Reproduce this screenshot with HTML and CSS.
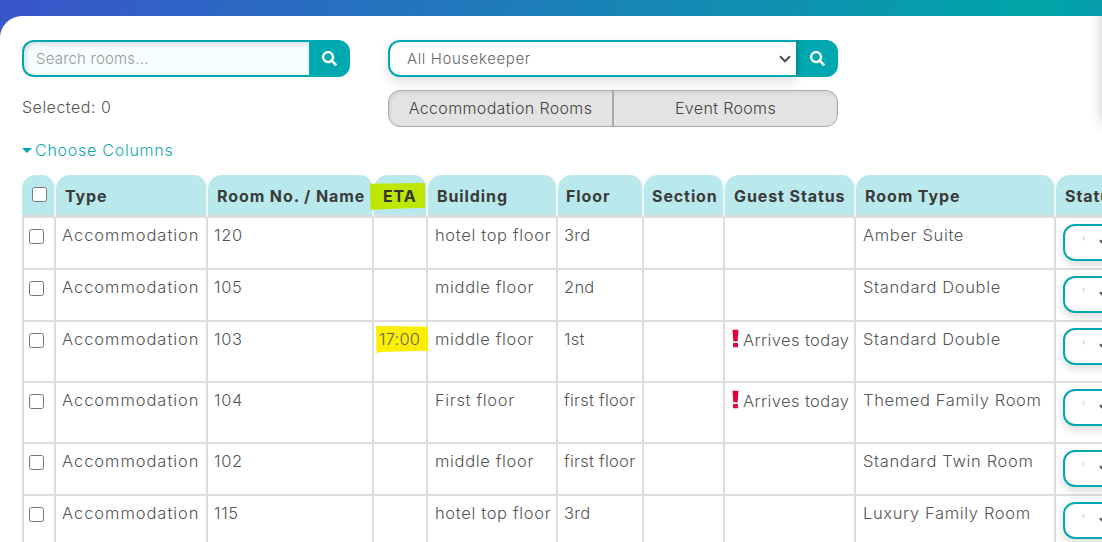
FILE: index.html
```html
<!DOCTYPE html>
<html lang="en">
<head>
<meta charset="utf-8">
<title>Rooms</title>
<link rel="stylesheet" href="styles.css">
</head>
<body>
<div class="topbar"></div>
<main class="panel">
  <div class="filters">
    <form class="group search">
      <input class="search-input" type="text" placeholder="Search rooms...">
      <button class="go" type="button"><svg class="mag" viewBox="0 0 512 512"><path d="M505 442.7L405.3 343c-4.5-4.5-10.6-7-17-7H372c27.6-35.3 44-79.7 44-128C416 93.1 322.9 0 208 0S0 93.1 0 208s93.1 208 208 208c48.3 0 92.7-16.4 128-44v16.3c0 6.4 2.5 12.5 7 17l99.7 99.7c9.4 9.4 24.6 9.4 33.9 0l28.3-28.3c9.4-9.4 9.4-24.6.1-34zM208 336c-70.7 0-128-57.2-128-128 0-70.7 57.2-128 128-128 70.7 0 128 57.2 128 128 0 70.7-57.2 128-128 128z"/></svg></button>
    </form>
    <form class="group housekeeper">
      <select class="hk-select"><option>All Housekeeper</option></select>
      <button class="go go-small" type="button"><svg class="mag" viewBox="0 0 512 512"><path d="M505 442.7L405.3 343c-4.5-4.5-10.6-7-17-7H372c27.6-35.3 44-79.7 44-128C416 93.1 322.9 0 208 0S0 93.1 0 208s93.1 208 208 208c48.3 0 92.7-16.4 128-44v16.3c0 6.4 2.5 12.5 7 17l99.7 99.7c9.4 9.4 24.6 9.4 33.9 0l28.3-28.3c9.4-9.4 9.4-24.6.1-34zM208 336c-70.7 0-128-57.2-128-128 0-70.7 57.2-128 128-128 70.7 0 128 57.2 128 128 0 70.7-57.2 128-128 128z"/></svg></button>
    </form>
    <div class="selected">Selected: 0</div>
    <div class="toggle">
      <button class="tab tab-a" type="button">Accommodation Rooms</button>
      <button class="tab tab-b" type="button">Event Rooms</button>
    </div>
  </div>
  <a class="choose" href="#"><span class="caret"></span>Choose Columns</a>
  <table class="rooms">
    <colgroup>
      <col class="c1"><col class="c2"><col class="c3"><col class="c4"><col class="c5"><col class="c6"><col class="c7"><col class="c8"><col class="c9"><col class="c10">
    </colgroup>
    <thead>
      <tr>
        <th class="check-h"><input type="checkbox"></th>
        <th>Type</th>
        <th>Room No. / Name</th>
        <th class="eta-h"><span class="mark-eta">ETA</span></th>
        <th>Building</th>
        <th class="floor-h">Floor</th>
        <th class="tight">Section</th>
        <th>Guest Status</th>
        <th>Room Type</th>
        <th>Status</th>
      </tr>
    </thead>
    <tbody>
      <tr class="short">
        <td class="check"><input type="checkbox"></td><td class="kind">Accommodation</td><td>120</td><td></td><td>hotel top floor</td><td class="fl">3rd</td><td></td><td></td><td>Amber Suite</td>
        <td class="st"><select class="status"><option>'</option></select></td>
      </tr>
      <tr class="short">
        <td class="check"><input type="checkbox"></td><td class="kind">Accommodation</td><td>105</td><td></td><td>middle floor</td><td class="fl">2nd</td><td></td><td></td><td>Standard Double</td>
        <td class="st"><select class="status"><option>'</option></select></td>
      </tr>
      <tr class="tall">
        <td class="check"><input type="checkbox"></td><td class="kind">Accommodation</td><td>103</td><td class="eta"><span class="mark-time">17:00</span></td><td>middle floor</td><td class="fl">1st</td><td></td>
        <td class="guest"><svg class="bang" viewBox="0 0 8 20"><path d="M0.6 0H7.4L6.5 13H1.5ZM1.2 15H6.8V20H1.2Z"/></svg>Arrives today</td><td>Standard Double</td>
        <td class="st"><select class="status"><option>'</option></select></td>
      </tr>
      <tr class="tall">
        <td class="check"><input type="checkbox"></td><td class="kind">Accommodation</td><td>104</td><td></td><td>First floor</td><td class="fl">first floor</td><td></td>
        <td class="guest"><svg class="bang" viewBox="0 0 8 20"><path d="M0.6 0H7.4L6.5 13H1.5ZM1.2 15H6.8V20H1.2Z"/></svg>Arrives today</td><td>Themed Family Room</td>
        <td class="st"><select class="status"><option>'</option></select></td>
      </tr>
      <tr class="short">
        <td class="check"><input type="checkbox"></td><td class="kind">Accommodation</td><td>102</td><td></td><td>middle floor</td><td class="fl">first floor</td><td></td><td></td><td>Standard Twin Room</td>
        <td class="st"><select class="status"><option>'</option></select></td>
      </tr>
      <tr class="short">
        <td class="check"><input type="checkbox"></td><td class="kind">Accommodation</td><td>115</td><td></td><td>hotel top floor</td><td class="fl">3rd</td><td></td><td></td><td>Luxury Family Room</td>
        <td class="st"><select class="status"><option>'</option></select></td>
      </tr>
    </tbody>
  </table>
</main>
</body>
</html>
```
FILE: styles.css
```css
* { box-sizing: border-box; }
html, body { margin: 0; height: 100%; overflow: hidden; }
body {
  background: linear-gradient(100deg, #3a55cb 0%, #00a5a8 87%, #1190b4 100%);
  font-family: "Inter", "Noto Sans", sans-serif;
  font-weight: 300;
  font-size: 16px;
  letter-spacing: 0.35px;
  color: #444;
}
.topbar { height: 16px; }
.panel {
  position: relative;
  background: #fff;
  border-top-left-radius: 22px;
  height: 526px;
  padding: 24px 0 0 22px;
  overflow: hidden;
}
.panel::after {
  content: "";
  position: absolute;
  top: -12px;
  right: -14px;
  width: 14px;
  height: 118px;
  box-shadow: 0 0 14px rgba(0, 0, 0, 0.22);
}
.filters {
  display: grid;
  grid-template-columns: 328px 450px;
  column-gap: 38px;
  row-gap: 13px;
  grid-template-rows: 37px 37px;
}
.group {
  display: flex;
  margin: 0;
  height: 37px;
  border-radius: 12px;
}
.search-input {
  flex: 1;
  min-width: 0;
  height: 37px;
  border: 2px solid #00a8b0;
  border-right: 0;
  border-radius: 12px 0 0 12px;
  background: #f5fdfe;
  box-shadow: inset 2px 2px 5px rgba(0, 0, 0, 0.12);
  padding: 0 12px 1px;
  font: inherit;
  font-size: 15px;
  letter-spacing: 0.2px;
  color: #444;
  outline: none;
}
.search-input::placeholder { color: #999; opacity: 1; }
.go {
  width: 41px;
  height: 37px;
  border: 0;
  padding: 0;
  background: #00a8b0;
  border-radius: 0 12px 12px 0;
  display: flex;
  align-items: center;
  justify-content: center;
}
.go-small { width: 42px; box-shadow: inset 5px 0 6px -4px rgba(0, 0, 0, 0.25); }
.mag { width: 15px; height: 15px; fill: #fff; }
.hk-select {
  flex: 1;
  min-width: 0;
  height: 37px;
  appearance: none;
  border: 2px solid #00a8b0;
  border-right: 0;
  border-radius: 12px 0 0 12px;
  background: #fff url("data:image/svg+xml,%3Csvg xmlns='http://www.w3.org/2000/svg' width='12' height='8' viewBox='0 0 12 8'%3E%3Cpath d='M1 1.2l5 5 5-5' fill='none' stroke='%23555' stroke-width='2.2'/%3E%3C/svg%3E") no-repeat 389px 13px;
  box-shadow: 0 5px 12px rgba(0, 0, 0, 0.13);
  padding: 0 12px 0 17px;
  font: inherit;
  font-size: 15px;
  letter-spacing: 0.6px;
  color: #666;
  outline: none;
}
.selected { align-self: center; color: #555; letter-spacing: 0.5px; padding-bottom: 3px; }
.toggle {
  display: flex;
  height: 37px;
  border: 1px solid #aaa;
  border-radius: 12px;
  background: #e3e3e3;
  box-shadow: inset 1px 2px 4px rgba(0, 0, 0, 0.08);
  overflow: hidden;
}
.tab {
  background: transparent;
  border: 0;
  padding: 0 0 2px;
  font: inherit;
  letter-spacing: inherit;
  color: #444;
}
.tab-a { width: 225px; border-right: 2px solid #aaa; }
.tab-b { flex: 1; }
.choose {
  display: flex;
  align-items: center;
  margin-top: 13px;
  height: 20px;
  color: #14a8b0;
  text-decoration: none;
  font-size: 16px;
  letter-spacing: 0.75px;
}
.caret {
  width: 0;
  height: 0;
  border-left: 5px solid transparent;
  border-right: 5px solid transparent;
  border-top: 5px solid #00a8b0;
  margin-right: 3px;
}
.rooms {
  margin-top: 15px;
  width: 1120px;
  table-layout: fixed;
  border-collapse: separate;
  border-spacing: 0;
  font-size: 16.5px;
  letter-spacing: 0.65px;
}
.c1 { width: 34px; } .c2 { width: 152px; } .c3 { width: 166px; } .c4 { width: 54px; }
.c5 { width: 130px; } .c6 { width: 86px; } .c7 { width: 81px; } .c8 { width: 131px; }
.c9 { width: 200px; } .c10 { width: 86px; }
th {
  height: 43px;
  background: #b9e9ec;
  border-bottom: 3px solid #ddd;
  border-right: 2px solid #eef5f5;
  border-radius: 14px 14px 0 0;
  padding: 2px 0 0 9px;
  text-align: left;
  font-size: 16px;
  font-weight: 700;
  white-space: nowrap;
  color: #3a3a3a;
  letter-spacing: 0.9px;
}
.check-h { padding: 0 0 2px 10px; }
.check-h input { margin: 0; width: 15px; height: 15px; display: block; }
td {
  border-right: 2px solid #ddd;
  border-bottom: 2px solid #ddd;
  padding: 7px 0 0 6px;
  vertical-align: top;
  white-space: nowrap;
  color: #555;
}
td:nth-child(5), td:nth-child(9) { padding-left: 7px; }
.kind { letter-spacing: 0.95px; }
.fl { letter-spacing: 0.25px; }
.check { border-left: 2px solid #ddd; padding: 11px 0 0 5px; }
.check input { margin: 0; width: 15px; height: 15px; display: block; }
tr.short td { height: 52px; }
tr.tall td { height: 61px; }
.tight { padding-left: 8px; }
.floor-h { padding-left: 8px; }
.eta-h { overflow: visible; padding-left: 0; }
.mark-eta {
  display: block;
  width: 55px;
  height: 27px;
  margin: 1px 0 0 -4px;
  line-height: 27px;
  padding-left: 13px;
  background: #bde600;
  color: #333;
  clip-path: polygon(0 3%, 100% 0, 100% 92%, 30% 96%, 1% 100%);
}
.eta { padding-left: 0; }
.mark-time {
  display: block;
  width: 52px;
  height: 27px;
  margin: -3px 0 0 2px;
  padding: 3px 0 0 3px;
  background: #fbee00;
  color: #666;
  letter-spacing: 0.2px;
  clip-path: polygon(0 0, 100% 3%, 100% 92%, 40% 94%, 10% 96%, 1% 100%);
}
.guest { padding-left: 7px; letter-spacing: 0.4px; }
.bang { width: 7px; height: 19px; fill: #e4003a; margin-right: 4px; vertical-align: -2px; }
.st { padding: 6px 0 0 7px; border-right: 0; }
.status {
  display: block;
  width: 120px;
  height: 37px;
  appearance: none;
  border: 2px solid #00a8b0;
  border-radius: 12px;
  background: #fff url("data:image/svg+xml,%3Csvg xmlns='http://www.w3.org/2000/svg' width='12' height='8' viewBox='0 0 12 8'%3E%3Cpath d='M1 1.2l5 5 5-5' fill='none' stroke='%23555' stroke-width='2.2'/%3E%3C/svg%3E") no-repeat 34px 13px;
  padding: 0 0 2px 16px;
  font: inherit;
  color: #ccc;
  box-shadow: 0 4px 8px rgba(0, 0, 0, 0.14);
  outline: none;
}
```
